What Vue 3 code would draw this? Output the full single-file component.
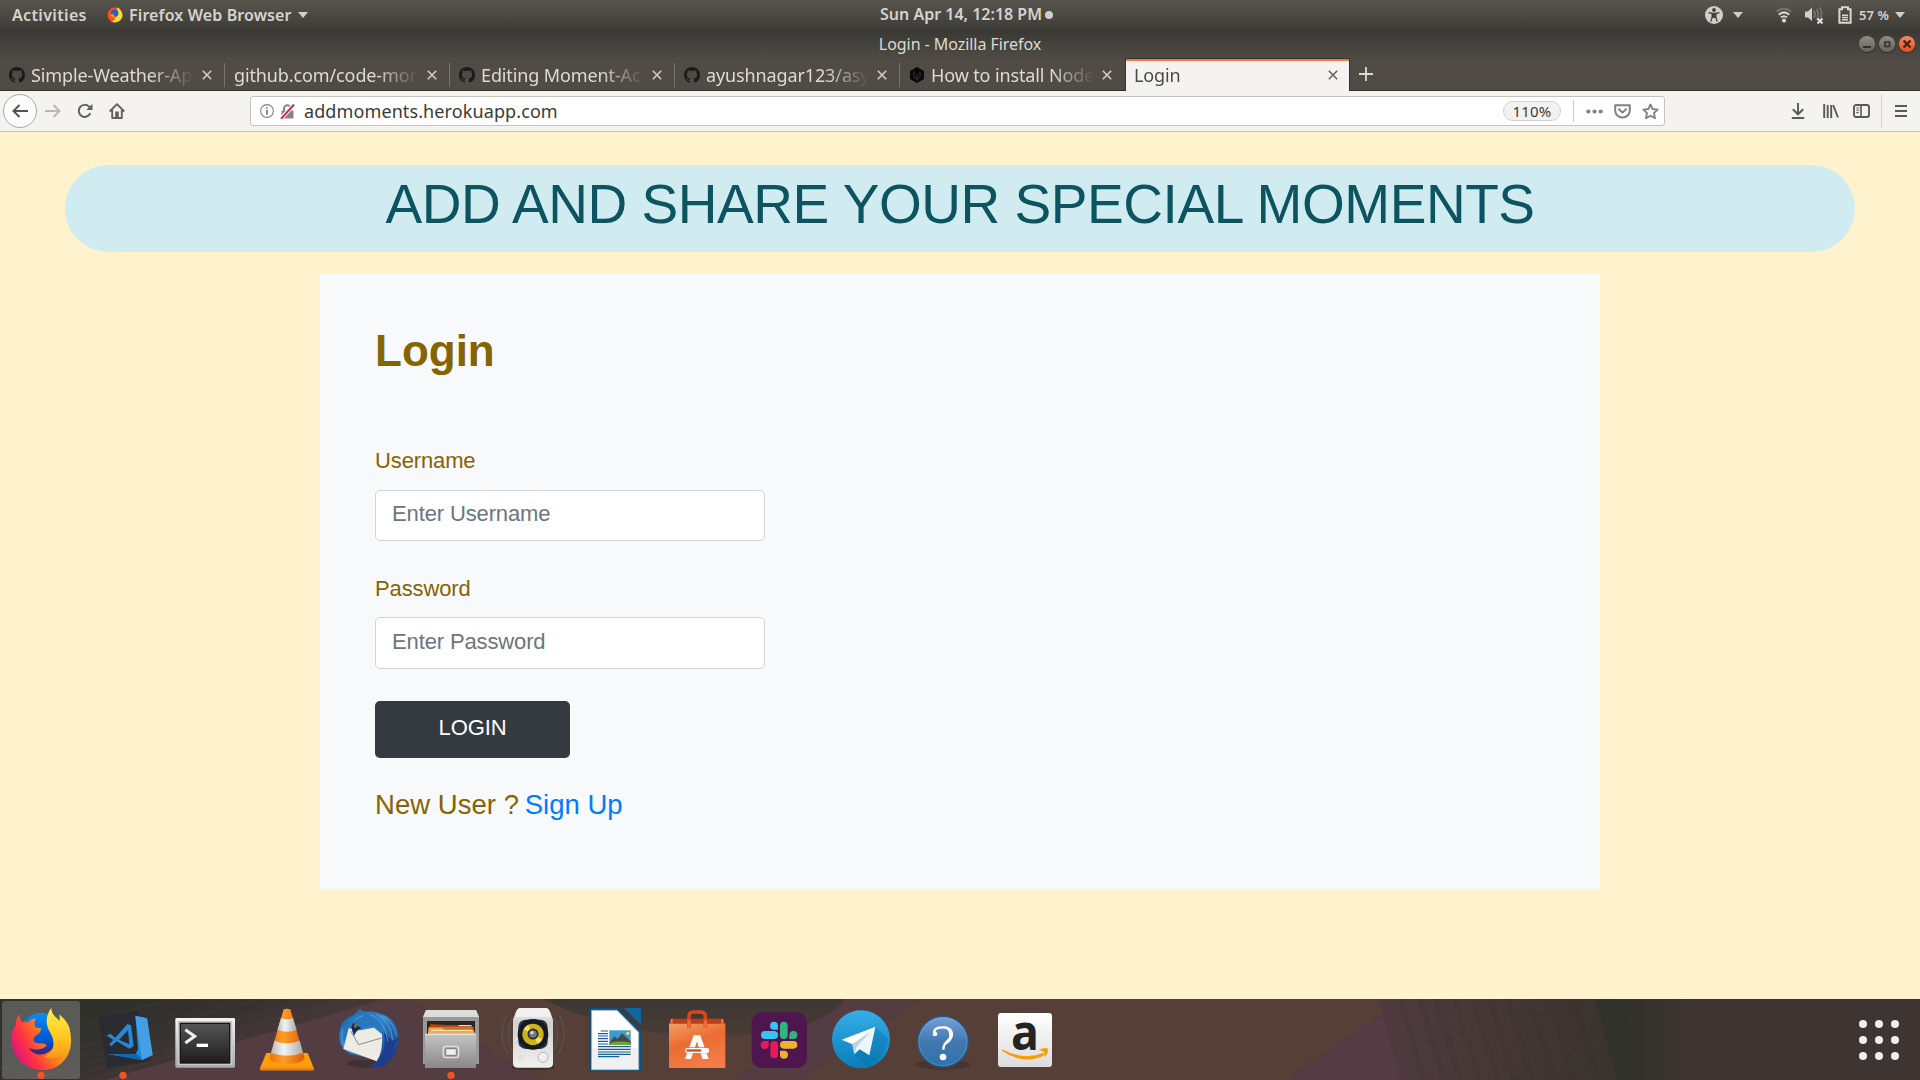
<script setup>
const tabs = [
  { title: 'Simple-Weather-Ap', icon: 'github' },
  { title: 'github.com/code-mor', icon: '' },
  { title: 'Editing Moment-Ac', icon: 'github' },
  { title: 'ayushnagar123/asy', icon: 'github' },
  { title: 'How to install Node', icon: 'hex' },
]
const rays = [1400, 1420, 1436, 1455, 1474, 1490, 1508, 1530, 1550, 1574]
</script>

<template>
  <div class="desktop">
    <header class="panel">
      <span class="activities">Activities</span>
      <svg class="ff-mini" viewBox="30 38 188 190">
        <circle cx="124" cy="132" r="88" fill="#ff4b1f" />
        <path d="M156 40C205 70 225 130 205 170C180 220 120 235 80 210C150 190 125 100 156 40Z" fill="#ffdb2e" />
        <circle cx="120" cy="112" r="44" fill="#1f5fd0" />
        <path d="M60 125L100 118L128 150L90 172Z" fill="#ff851b" />
      </svg>
      <span class="app-name">Firefox Web Browser</span>
      <svg class="caret c1" viewBox="0 0 10 6"><path d="M0 0H10L5 6Z" /></svg>
      <span class="clock">Sun Apr 14, 12:18 PM</span>
      <i class="clock-dot"></i>
      <div class="status">
        <svg width="18" height="18" viewBox="0 0 18 18">
          <circle cx="9" cy="9" r="9" fill="#d0cfcb" />
          <circle cx="9" cy="4" r="1.9" fill="#42413c" />
          <path d="M3.6 6.6L7.2 7.5H10.8L14.4 6.6M7.2 7.5V11L5.8 15.6M10.8 7.5V11L12.2 15.6" fill="none" stroke="#42413c" stroke-width="1.3" />
          <path d="M7 7h4v5H7z" fill="#42413c" />
        </svg>
        <svg class="caret c2" viewBox="0 0 10 6"><path d="M0 0H10L5 6Z" /></svg>
        <svg class="wifi" width="16" height="16" viewBox="0 0 16 16" fill="none" stroke-width="2">
          <path d="M.8 4.700Q8-1.800 15.200 4.700" stroke="#77756e" />
          <path d="M2.800 7.800Q8 3 13.200 7.800M5 10.600Q8 7.900 11 10.600" stroke="#d8d7d3" />
          <circle cx="8" cy="13.600" r="2.100" fill="#d8d7d3" />
        </svg>
        <svg class="volume" width="19" height="18" viewBox="0 0 19 18">
          <path d="M0 5.500H3L7 1.500V15L3 11.500H0Z" fill="#d0cfcb" />
          <path d="M9 5Q11 8.500 9 12M11.500 3Q15 8.500 11.500 14M14.500 1.500Q18 7 15.500 12" fill="none" stroke="#77756e" stroke-width="1.700" />
          <path d="M12.500 12.500L17.500 17.500M17.500 12.500L12.500 17.500" stroke="#e2e1dd" stroke-width="2" />
        </svg>
        <svg class="battery" width="14" height="18" viewBox="0 0 14 18">
          <path d="M4 1.200H10V3.200H12.600V16.800H1.400V3.200H4Z" fill="none" stroke="#d8d7d3" stroke-width="2" />
          <path d="M4 9.300H10M4 11.500H10M4 13.700H10" stroke="#d8d7d3" stroke-width="1.500" />
        </svg>
        <span class="percent">57 %</span>
        <svg class="caret c3" viewBox="0 0 10 6"><path d="M0 0H10L5 6Z" /></svg>
      </div>
    </header>

    <div class="titlebar">
      <span class="title">Login - Mozilla Firefox</span>
      <div class="controls">
        <i><svg viewBox="0 0 16 16"><path d="M4 11H12" stroke="#33322e" stroke-width="2" /></svg></i>
        <i><svg viewBox="0 0 16 16"><path d="M6 6H10.500V10.500H6Z" fill="none" stroke="#33322e" stroke-width="1.700" /></svg></i>
        <i class="close"><svg viewBox="0 0 16 16"><path d="M4.500 4.500L11.500 11.500M11.500 4.500L4.500 11.500" stroke="#47250f" stroke-width="2.400" /></svg></i>
      </div>
    </div>

    <nav class="tabs">
      <div v-for="t in tabs" :key="t.title" class="tab">
        <svg v-if="t.icon === 'github'" class="fav" viewBox="0 0 16 16">
          <path fill="#1b1b1b" d="M8 0C3.58 0 0 3.58 0 8c0 3.54 2.29 6.53 5.47 7.59.4.07.55-.17.55-.38 0-.19-.01-.82-.01-1.49-2.01.37-2.53-.49-2.69-.94-.09-.23-.48-.94-.82-1.13-.28-.15-.68-.52-.01-.53.63-.01 1.08.58 1.23.82.72 1.21 1.87.87 2.33.66.07-.52.28-.87.51-1.07-1.78-.2-3.64-.89-3.64-3.95 0-.87.31-1.59.82-2.15-.08-.2-.36-1.02.08-2.12 0 0 .67-.21 2.2.82.64-.18 1.32-.27 2-.27s1.36.09 2 .27c1.53-1.04 2.2-.82 2.2-.82.44 1.1.16 1.92.08 2.12.51.56.82 1.27.82 2.15 0 3.07-1.87 3.75-3.65 3.95.29.25.54.73.54 1.48 0 1.07-.01 1.93-.01 2.2 0 .21.15.46.55.38A8.01 8.01 0 0016 8c0-4.42-3.58-8-8-8z" />
        </svg>
        <svg v-else-if="t.icon === 'hex'" class="fav" viewBox="0 0 16 16">
          <path d="M8 0L15 4V12L8 16L1 12V4Z" fill="#080808" />
          <path d="M5 4.500V10L8 12.500L11 10V4.500M8 7V14" fill="none" stroke="#3c3a36" stroke-width=".9" />
        </svg>
        <span class="label">{{ t.title }}</span>
        <svg class="x" viewBox="0 0 10 10"><path d="M.8 .8L9.200 9.200M9.200 .8L.8 9.200" /></svg>
      </div>
      <div class="tab active">
        <span class="label">Login</span>
        <svg class="x" viewBox="0 0 10 10"><path d="M.8 .8L9.200 9.200M9.200 .8L.8 9.200" /></svg>
      </div>
      <svg class="plus" viewBox="0 0 14 14"><path d="M7 0V14M0 7H14" stroke="#dcdad5" stroke-width="1.800" /></svg>
    </nav>

    <div class="toolbar">
      <span class="back">
        <svg width="16" height="14" viewBox="0 0 16 14"><path d="M16 7H1.500M7.500 1L1.500 7L7.500 13" fill="none" stroke="#55544f" stroke-width="2" /></svg>
      </span>
      <svg class="fwd" width="16" height="14" viewBox="0 0 16 14"><path d="M0 7H14.500M8.500 1L14.500 7L8.500 13" fill="none" stroke="#b9b8b5" stroke-width="2" /></svg>
      <svg class="reload" width="16" height="16" viewBox="0 0 16 16">
        <path d="M13.300 10.200A6 6 0 1 1 12 3.600L13.500 5" fill="none" stroke="#62615d" stroke-width="2" />
        <path d="M15.500 .8V7H9.300Z" fill="#62615d" />
      </svg>
      <svg class="home" width="16" height="16" viewBox="0 0 16 16">
        <path d="M.7 8.500L8 1.200L15.300 8.500M3.200 7V15H12.800V7" fill="none" stroke="#62615d" stroke-width="1.900" stroke-linejoin="round" />
        <path d="M6.200 15V8.500H9.800V15Z" fill="#62615d" />
      </svg>
      <div class="urlbar">
        <svg class="info" width="14" height="14" viewBox="0 0 14 14">
          <circle cx="7" cy="7" r="6.400" fill="none" stroke="#808080" stroke-width="1.100" />
          <path d="M7 6V10.700M7 3.200V4.800" stroke="#777" stroke-width="1.700" />
        </svg>
        <svg class="lock" width="15" height="15" viewBox="0 0 15 15">
          <path d="M4 7V4.500A3.300 3.300 0 0 1 10.600 4.500V7" fill="none" stroke="#858585" stroke-width="2" />
          <rect x="1.500" y="6.500" width="12" height="8" rx="1" fill="#858585" />
          <path d="M1.200 14.500L13.800 .8" stroke="#fff" stroke-width="4" />
          <path d="M1 14.800L14 .5" stroke="#ff1040" stroke-width="2" />
        </svg>
        <span class="url">addmoments.herokuapp.com</span>
        <span class="zoom">110%</span>
        <i class="sep"></i>
        <svg class="dots" width="17" height="5" viewBox="0 0 17 5" fill="#828282"><circle cx="2.300" cy="2.500" r="2.100" /><circle cx="8.500" cy="2.500" r="2.100" /><circle cx="14.700" cy="2.500" r="2.100" /></svg>
        <svg class="pocket" width="17" height="15" viewBox="0 0 17 15" fill="none" stroke="#808080" stroke-width="2" stroke-linejoin="round">
          <path d="M1.200 1.200H15.800V6.500A7.300 7 0 0 1 1.200 6.500Z" /><path d="M5 5.200L8.500 8.600L12 5.200" stroke-linecap="round" />
        </svg>
        <svg class="star" width="17" height="17" viewBox="0 0 17 17"><path d="M8.500 1.500L10.600 6L15.700 6.600L12 10L13 15.300L8.500 12.700L4 15.300L5 10L1.300 6.600L6.400 6Z" fill="none" stroke="#808080" stroke-width="1.800" stroke-linejoin="round" /></svg>
      </div>
      <div class="tools">
        <svg width="14" height="16" viewBox="0 0 14 16"><path d="M7 0V11M1.800 6.200L7 11.300L12.200 6.200M.8 15H13.200" fill="none" stroke="#5a5955" stroke-width="1.900" /></svg>
        <svg class="lib" width="16" height="14" viewBox="0 0 16 14"><path d="M1.200 0V14M4.700 1V14M8.200 1V14M10.200 1.200L15 13.500" fill="none" stroke="#5a5955" stroke-width="1.900" /></svg>
        <svg class="side" width="17" height="14" viewBox="0 0 17 14">
          <rect x="1" y="1" width="15" height="12" rx="2" fill="none" stroke="#5a5955" stroke-width="1.900" />
          <path d="M8 1V13" stroke="#5a5955" stroke-width="1.600" /><path d="M3.300 4H6.300M3.300 6.300H6.300M3.300 8.600H5.600" stroke="#5a5955" stroke-width="1.100" />
        </svg>
        <i class="tsep"></i>
        <svg width="12" height="12" viewBox="0 0 12 12"><path d="M0 1H12M0 6H12M0 11H12" stroke="#5a5955" stroke-width="2" /></svg>
      </div>
    </div>

    <main class="page">
      <h1 class="banner">ADD AND SHARE YOUR SPECIAL MOMENTS</h1>
      <section class="card">
        <h2>Login</h2>
        <label for="user">Username</label>
        <input id="user" type="text" placeholder="Enter Username" />
        <label for="pass" class="second">Password</label>
        <input id="pass" class="pass" type="password" placeholder="Enter Password" />
        <button type="button">LOGIN</button>
        <p>New User ? <a>Sign Up</a></p>
      </section>
    </main>

    <footer class="dock">
      <svg class="wall" viewBox="0 0 1920 81" preserveAspectRatio="none">
        <defs>
          <linearGradient id="wl" gradientUnits="userSpaceOnUse" x1="150" y1="0" x2="180" y2="81">
            <stop offset="0" stop-color="#31312c" /><stop offset=".5" stop-color="#373230" /><stop offset="1" stop-color="#49383a" />
          </linearGradient>
          <linearGradient id="wr" gradientUnits="userSpaceOnUse" x1="1385" y1="0" x2="1600" y2="-20">
            <stop offset="0" stop-color="#4f3b3f" /><stop offset=".5" stop-color="#453735" /><stop offset="1" stop-color="#3a332f" />
          </linearGradient>
          <linearGradient id="we" gradientUnits="userSpaceOnUse" x1="1600" y1="0" x2="1920" y2="0">
            <stop offset="0" stop-color="#32322c" /><stop offset=".1" stop-color="#33322c" /><stop offset=".28" stop-color="#3d3431" /><stop offset="1" stop-color="#3e3432" />
          </linearGradient>
          <linearGradient id="wa" x1="0" y1="0" x2="0" y2="1"><stop offset="0" stop-color="#3d3733" /><stop offset="1" stop-color="#493b35" /></linearGradient>
        </defs>
        <rect width="1920" height="81" fill="#563f37" />
        <path d="M0 0H410L540 81H0Z" fill="#543c43" />
        <path d="M0 0H385L105 81H0Z" fill="url(#wl)" />
        <path d="M0 70L260 0M30 81L310 0M60 81L345 0M90 81L360 0M0 50L170 0" stroke="#4a4540" stroke-opacity=".45" fill="none" />
        <path d="M733 81L845 0H923L800 81Z" fill="#543c43" />
        <path d="M543 0Q620 38 720 37T845 0Z" fill="url(#wa)" />
        <path d="M1285 81L1403 0H1600V81Z" fill="#543b44" />
        <path d="M1378 0H1600L1616 81H1401Z" fill="url(#wr)" />
        <path v-for="r in rays" :key="r" :d="`M${r} 0L${r + 24} 81`" stroke="#37322e" stroke-opacity=".16" stroke-width="6" />
        <path d="M1595 0H1920V81H1616Z" fill="url(#we)" />
      </svg>

      <!-- Firefox -->
      <svg class="app" viewBox="0 12 246 243">
        <defs>
          <linearGradient id="fx" x1="0" y1=".7" x2="1" y2=".2"><stop offset="0" stop-color="#d8108a" /><stop offset=".25" stop-color="#ff3045" /><stop offset=".6" stop-color="#ff8a16" /><stop offset="1" stop-color="#ffd22e" /></linearGradient>
          <linearGradient id="fy" x1="0" y1="0" x2="0" y2="1"><stop offset="0" stop-color="#fff34a" /><stop offset=".6" stop-color="#ffc51f" /><stop offset="1" stop-color="#ff9417" /></linearGradient>
          <linearGradient id="fb" x1="0" y1="0" x2="0" y2="1"><stop offset="0" stop-color="#0a8ef5" /><stop offset=".6" stop-color="#0059d6" /><stop offset="1" stop-color="#3a1f78" /></linearGradient>
        </defs>
        <rect x="6" y="18" width="234" height="234" rx="9" fill="#fff" fill-opacity=".2" />
        <circle cx="124" cy="118" r="65" fill="url(#fb)" />
        <path d="M58 58Q46 72 48 90C28 112 30 158 52 187C82 230 150 238 186 203C212 180 218 142 210 108C205 90 198 72 178 60C184 92 184 120 168 148C150 182 104 190 86 158C104 166 124 166 140 152C134 142 118 148 104 142Q96 134 106 122Q122 116 124 100Q108 98 106 96Q100 82 108 70Q92 72 84 82Q72 78 66 82Q58 72 58 58Z" fill="url(#fx)" />
        <path d="M154 38C136 64 136 88 150 112C170 146 160 172 132 186C152 196 178 188 192 170C212 142 214 110 206 92C198 76 186 70 178 58C180 66 180 72 178 78C170 66 154 60 154 38Z" fill="url(#fy)" />
        <circle cx="123" cy="241" r="11" fill="#f05423" />
      </svg>
      <!-- VS Code -->
      <svg class="app" viewBox="246 12 246 243">
        <path d="M296 66L418 46L450 198L320 219Z" fill="#2a2b31" /><path d="M420 46L446 198" stroke="#3a3a3f" stroke-width="3" />
        <path d="M406 62L441 70L458 180L426 195L322 177L407 178L414 163Z" fill="#2489d8" />
        <path d="M406 62L441 70L450 130L458 180L426 195Z" fill="#43a0e6" /><path d="M322 177L426 195L414 178Z" fill="#0d69b5" />
        <path d="M320 122L331 116L346 128L382 87L393 91L401 153L388 161L350 139L335 152L327 150L340 134ZM384 106L357 134L388 148Z" fill="#2789d5" fill-rule="evenodd" />
        <circle cx="369" cy="241" r="11" fill="#f05423" />
      </svg>
      <!-- Terminal -->
      <svg class="app" viewBox="492 12 246 243">
        <defs><linearGradient id="te" x1="0" y1="0" x2="0" y2="1"><stop offset="0" stop-color="#555" /><stop offset="1" stop-color="#1d1d1d" /></linearGradient><linearGradient id="tf" x1="0" y1="0" x2="0" y2="1"><stop offset="0" stop-color="#f4f4f4" /><stop offset="1" stop-color="#a9a9a9" /></linearGradient></defs>
        <rect x="526" y="69" width="179" height="149" rx="4" fill="url(#tf)" /><rect x="534" y="78" width="163" height="132" fill="#c9c9c9" /><rect x="541" y="85" width="148" height="119" fill="url(#te)" stroke="#171717" stroke-width="4" />
        <path d="M556 104L584 124L556 144" fill="none" stroke="#f1f1f1" stroke-width="9" /><path d="M590 151H624" stroke="#fff" stroke-width="10" />
      </svg>
      <!-- VLC -->
      <svg class="app" viewBox="738 12 246 243">
        <defs><linearGradient id="vo" x1="0" y1="0" x2="1" y2="0"><stop offset="0" stop-color="#e87400" /><stop offset=".4" stop-color="#ff9a2b" /><stop offset="1" stop-color="#db5e00" /></linearGradient><linearGradient id="vw" x1="0" y1="0" x2="1" y2="0"><stop offset="0" stop-color="#b9b9b9" /><stop offset=".4" stop-color="#f3f3f3" /><stop offset="1" stop-color="#aaa" /></linearGradient></defs>
        <path d="M799 174H923L942 221Q942 226 936 226H784Q779 226 780 220Z" fill="#ff9e0c" /><path d="M780 218H942V226H780Z" fill="#f47f00" />
        <path d="M851 43Q861 39 871 43L914 190Q905 207 861 207T808 190Z" fill="url(#vo)" />
        <path d="M843 69Q861 77 879 69L890 105Q861 116 832 105Z" fill="url(#vw)" /><path d="M824 137Q861 152 899 137L909 174Q861 190 813 174Z" fill="url(#vw)" />
      </svg>
      <!-- Thunderbird -->
      <svg class="app" viewBox="984 12 246 243">
        <defs><linearGradient id="tb" x1="0" y1="0" x2="1" y2="1"><stop offset="0" stop-color="#1b62ab" /><stop offset=".45" stop-color="#2f86cc" /><stop offset="1" stop-color="#152866" /></linearGradient></defs>
        <ellipse cx="1100" cy="206" rx="60" ry="12" fill="#000" fill-opacity=".2" />
        <path d="M1018 135C1014 96 1030 70 1058 62L1080 42L1092 50C1140 44 1190 70 1195 115C1200 163 1178 216 1108 218L1134 196L1050 176Q1022 160 1018 135Z" fill="url(#tb)" />
        <path d="M1046 100L1030 162L1130 199Q1150 170 1146 118L1122 98L1080 106Z" fill="#eeebe4" />
        <path d="M1052 108L1076 149L1144 129" fill="none" stroke="#8f8b84" stroke-width="3" />
        <path d="M1048 90Q1050 56 1092 50Q1150 56 1156 120Q1140 92 1106 94Q1070 98 1062 124Q1056 110 1054 96Z" fill="#2878bd" />
        <path d="M1054 96L1062 120Q1068 104 1084 100L1060 84Z" fill="#12294f" /><circle cx="1067" cy="93" r="5" fill="#e68422" /><circle cx="1068" cy="93" r="2.500" fill="#111" />
        <path d="M1152 112C1160 164 1146 196 1108 218Q1160 220 1182 180L1166 188L1190 160L1174 164L1196 130L1176 138Z" fill="#1c3c91" />
        <path d="M1110 58Q1154 74 1164 140M1130 58Q1172 78 1178 134M1146 62Q1184 84 1190 124M1090 62Q1070 66 1062 78M1028 104Q1022 136 1032 156" fill="none" stroke="#70bdf0" stroke-width="3" stroke-opacity=".6" />
      </svg>
      <!-- Files -->
      <svg class="app" viewBox="30 12 246 243">
        <defs><linearGradient id="fi" x1="0" y1="0" x2="0" y2="1"><stop offset="0" stop-color="#c4c4c4" /><stop offset="1" stop-color="#888" /></linearGradient></defs>
        <path d="M78 45H228L237 66V207H69V66Z" fill="#999" /><path d="M78 45H228L237 66H69Z" fill="#dcdcdc" /><path d="M81 78H225V122H81Z" fill="#292522" />
        <path d="M91 87L140 90H216V120H87Z" fill="#a8440e" /><path d="M86 95H220V120H84Z" fill="#d66e1b" /><path d="M86 98H128L132 105H222V120H84Z" fill="#eda653" /><path d="M94 106H216M176 92H214" stroke="#fff0cf" stroke-width="3" /><path d="M84 112H224V120H84Z" fill="#e1b06b" />
        <path d="M75 120Q75 117 79 117H225Q229 117 229 120L228 219H75Z" fill="url(#fi)" /><path d="M76 118H228" stroke="#eee" stroke-width="3" />
        <rect x="130" y="154" width="46" height="34" rx="7" fill="#a8a8a8" stroke="#e2e2e2" stroke-width="4" /><rect x="137" y="161" width="32" height="20" rx="2" fill="#eee" stroke="#777" stroke-width="3" />
        <circle cx="153" cy="241" r="11" fill="#f05423" />
      </svg>
      <!-- Rhythmbox -->
      <svg class="app" viewBox="276 12 246 243">
        <defs><linearGradient id="rh" x1="0" y1="0" x2="0" y2="1"><stop offset="0" stop-color="#fafafa" /><stop offset=".25" stop-color="#cfcfcf" /><stop offset="1" stop-color="#f0f0ee" /></linearGradient></defs>
        <g fill="none" stroke="#66708d" stroke-opacity=".3" stroke-width="4"><path d="M336 68Q314 115 336 168M322 58Q290 115 322 175M462 68Q484 115 462 168M476 58Q508 115 476 175" /></g>
        <ellipse cx="399" cy="216" rx="66" ry="10" fill="#000" fill-opacity=".25" />
        <path d="M360 39H438Q446 39 451 52L459 74V205Q459 218 446 218H352Q339 218 339 205V74L348 50Q353 39 360 39Z" fill="url(#rh)" /><path d="M360 40H438Q448 44 452 65H346Q350 44 360 40Z" fill="#f1f1f1" />
        <rect x="355" y="74" width="88" height="88" rx="22" fill="#2a3346" /><circle cx="399" cy="118" r="46" fill="#151a24" /><circle cx="399" cy="118" r="32" fill="#cdb41b" /><path d="M399 118L371 103A32 32 0 0 1 385 89ZM399 118L427 133A32 32 0 0 1 413 147Z" fill="#f0e05c" /><circle cx="399" cy="117" r="14" fill="#777c82" stroke="#292d33" stroke-width="5" /><circle cx="396" cy="113" r="5" fill="#d8dce0" />
        <circle cx="429" cy="187" r="15" fill="#efefef" stroke="#b7b7b7" stroke-width="3" /><circle cx="362" cy="189" r="6" fill="none" stroke="#ccc" stroke-width="2" />
      </svg>
      <!-- Writer -->
      <svg class="app" viewBox="522 12 246 243">
        <path d="M567 39H655L723 108V231H567Z" fill="#0a4f7d" /><path d="M672 39H719Q723 39 723 44V90Z" fill="#0d67a2" /><path d="M575 46H651L716 112V224H575Z" fill="#fff" stroke="#a6b6c0" stroke-width="3" /><path d="M577 160H714V221H577Z" fill="#f0f0f0" />
        <path d="M602 108H624M594 116H624M594 123H624M594 131H624M594 139H624M594 147H624M594 155H692M594 163H692M594 171H692M594 178H692M594 185H658" stroke="#176195" stroke-width="3.500" />
        <rect x="628" y="106" width="64" height="44" fill="#3b9bd7" /><path d="M628 143L643 124L652 132L666 115L692 139V150H628Z" fill="#454c4c" /><path d="M628 144Q660 136 692 143V150H628Z" fill="#6da82e" /><circle cx="683" cy="115" r="5" fill="#ffe53b" />
      </svg>
      <!-- Software -->
      <svg class="app" viewBox="768 12 246 243">
        <defs><linearGradient id="so" x1="0" y1="0" x2=".4" y2="1"><stop offset="0" stop-color="#f0a064" /><stop offset=".5" stop-color="#ec6b33" /><stop offset="1" stop-color="#f27b46" /></linearGradient></defs>
        <path d="M814 71H968L975 86H807Z" fill="#b8401a" /><rect x="807" y="86" width="169" height="133" fill="url(#so)" />
        <path d="M867 98V65Q867 51 879 51H904Q916 51 916 65V98" fill="none" stroke="#d9471c" stroke-width="11" /><path d="M867 98V76M916 98V76" stroke="#f26a38" stroke-width="9" /><path d="M815 72V86M967 72V86" stroke="#ef784a" stroke-width="6" />
        <path d="M881 121H901L926 192H907L891 139L873 192H855Z" fill="#fff" /><rect x="855" y="157" width="73" height="18" rx="6" fill="#ee7038" /><rect x="856" y="159" width="71" height="15" rx="5" fill="#fff" /><rect x="859" y="163" width="45" height="7" rx="3" fill="#e54f1e" />
      </svg>
      <!-- Slack -->
      <svg class="app" viewBox="1014 12 246 243">
        <rect x="1055" y="52" width="166" height="167" rx="32" fill="#4f154e" />
        <g fill="#35c5f0"><rect x="1083" y="108" width="51" height="24" rx="12" /><path d="M1134 104H1122A12 12 0 1 1 1134 92Z" /></g>
        <g fill="#2eb67d"><rect x="1140" y="80" width="23" height="52" rx="11.500" /><path d="M1168 132V120A12 12 0 1 1 1180 132Z" /></g>
        <g fill="#ecb22e"><rect x="1140" y="138" width="52" height="23" rx="11.500" /><path d="M1140 167H1152A12 12 0 1 1 1140 179Z" /></g>
        <g fill="#e01e5a"><rect x="1111" y="138" width="23" height="52" rx="11.500" /><path d="M1106 138V150A12 12 0 1 1 1094 138Z" /></g>
      </svg>
      <!-- Telegram -->
      <svg class="app" viewBox="60 12 246 243">
        <defs><linearGradient id="tg" x1="0" y1="0" x2="0" y2="1"><stop offset="0" stop-color="#36aee9" /><stop offset="1" stop-color="#087db9" /></linearGradient></defs>
        <circle cx="183" cy="133" r="87" fill="url(#tg)" /><path d="M226 96L264 130Q258 180 205 217L160 178Z" fill="#08669e" fill-opacity=".3" />
        <path d="M126 134L226 96L208 181L179 163L163 178L157 147Z" fill="#edf5fa" /><path d="M126 134L226 96L157 147Z" fill="#fff" /><path d="M157 147L210 112L170 155L163 178Z" fill="#bdd2df" />
      </svg>
      <!-- Help -->
      <svg class="app" viewBox="306 12 246 243">
        <defs><linearGradient id="he" x1="0" y1="0" x2="0" y2="1"><stop offset="0" stop-color="#77a0d8" /><stop offset=".5" stop-color="#4278b0" /><stop offset="1" stop-color="#2d73aa" /></linearGradient></defs>
        <ellipse cx="429" cy="209" rx="82" ry="15" fill="#1b1717" fill-opacity=".25" /><circle cx="429" cy="140" r="76" fill="url(#he)" stroke="#235984" stroke-width="4" /><circle cx="429" cy="140" r="72" fill="none" stroke="#8fb8de" stroke-opacity=".5" stroke-width="2" />
        <path d="M404 121Q396 96 430 97Q454 98 454 119C454 139 430 136 430 164" fill="none" stroke="#fff" stroke-width="7" /><path d="M436 94Q462 99 459 122Q455 139 436 150Q450 133 447 115Q446 102 428 97Z" fill="#fff" /><circle cx="405" cy="117" r="7" fill="#fff" /><circle cx="429" cy="186" r="10" fill="#fff" />
      </svg>
      <!-- Amazon -->
      <svg class="app" viewBox="552 12 246 243">
        <defs><linearGradient id="am" x1="0" y1="0" x2="0" y2="1"><stop offset="0" stop-color="#fff" /><stop offset="1" stop-color="#dcdcdc" /></linearGradient></defs>
        <rect x="594" y="54" width="162" height="162" rx="9" fill="url(#am)" />
        <text x="633" y="166" class="amazon-a" textLength="84" lengthAdjust="spacingAndGlyphs">a</text>
        <path d="M606 163Q672 198 730 173L735 180Q672 212 606 167Z" fill="#ff9900" /><path d="M716 165Q735 156 744 161Q745 174 734 187Q740 168 716 165Z" fill="#ff9900" />
      </svg>
      <svg class="grid" viewBox="0 0 40 40" fill="#efeeed">
        <template v-for="r in 3" :key="r"><circle v-for="c in 3" :key="c" :cx="c * 16 - 12" :cy="r * 16 - 12" r="4" /></template>
      </svg>
    </footer>
  </div>
</template>

<style>
body { margin: 0; overflow: hidden; }
</style>

<style scoped>
* { box-sizing: border-box; }
.desktop { width: 1920px; height: 1080px; display: flex; flex-direction: column; font-family: "Noto Sans", sans-serif; background: #fff3cd; overflow: hidden; }
svg { display: block; flex: none; }
.panel { position: relative; height: 30px; flex: none; display: flex; align-items: center; background: linear-gradient(#58554d, #3d3c37); color: #d4d3cf; font-size: 16px; font-weight: 600; line-height: 28px; white-space: nowrap; }
.activities { width: 96px; padding-left: 12px; letter-spacing: .35px; margin-top: -1px; }
.app-name { letter-spacing: .12px; margin-top: -1px; }
.ff-mini { width: 16px; height: 16px; margin-right: 6px; margin-left: 11px; }
.caret { width: 10px; height: 6px; fill: #d0cfcb; }
.c1 { margin-left: 6px; }
.clock { position: absolute; left: 880px; top: 0; }
.clock-dot { position: absolute; left: 1045px; top: 11px; width: 8px; height: 8px; border-radius: 50%; background: #d0cfcb; }
.status { margin-left: auto; display: flex; align-items: center; padding-right: 15px; }
.c2 { margin-left: 10px; }
.wifi { margin-left: 33px; }
.volume { margin-left: 13px; }
.battery { margin-left: 14px; }
.percent { font-size: 13px; margin-left: 7px; width: 32px; font-weight: 600; letter-spacing: .1px; }
.c3 { margin-left: 4px; }
.titlebar { height: 28px; flex: none; position: relative; background: linear-gradient(#393834, #4e4b44); color: #dcdad4; font-size: 16px; line-height: 28px; text-align: center; }
.title { display: inline-block; letter-spacing: -.05px; }
.controls { position: absolute; right: 5px; top: 6px; display: flex; gap: 4px; }
.controls i { width: 16px; height: 16px; border-radius: 50%; background: linear-gradient(#8e8c84, #65635c); box-shadow: 0 1px 1px #2d2c28; }
.controls .close { background: linear-gradient(#f58a68, #e74e1d); }
.tabs { height: 33px; flex: none; display: flex; background: #504c45; border-bottom: 1px solid #33302b; }
.tab { width: 225px; height: 32px; display: flex; align-items: center; padding: 2px 13px 0 9px; position: relative; color: #dedbd5; font-size: 18px; }
.tab:not(.active):not(:nth-child(5))::after { content: ""; position: absolute; right: 0; top: 5px; height: 24px; width: 1px; background: #78746c; }
.fav { width: 16px; height: 16px; margin-right: 6px; }
.label { flex: 1; min-width: 0; white-space: nowrap; overflow: hidden; margin-right: 5px; line-height: 28px; letter-spacing: -.12px; -webkit-mask-image: linear-gradient(to left, transparent 3px, #000 46px); mask-image: linear-gradient(to left, transparent 3px, #000 46px); }
.x { width: 10px; height: 10px; fill: none; stroke: #d0cdc7; stroke-width: 1.600; }
.active { height: 33px; background: #f4f3f2; border: 1px solid #35322d; border-bottom: 0; color: #4a4945; padding: 0 11px 0 8px; box-shadow: inset 0 2px #ee7a4c; }
.active .x { stroke: #666; }
.plus { width: 14px; height: 14px; margin: 9px 0 0 9px; }
.toolbar { height: 41px; flex: none; background: #f4f3f2; border-bottom: 1px solid #c6c3bf; display: flex; align-items: center; padding-left: 3px; }
.back { width: 34px; height: 34px; border: 1px solid #aaa9a6; border-radius: 50%; background: #fcfcfc; display: flex; align-items: center; justify-content: center; }
.fwd { margin-left: 8px; }
.reload { margin-left: 16px; }
.home { margin-left: 16px; }
.urlbar { margin-left: 125px; width: 1415px; height: 30px; border: 1px solid #c6c2be; border-radius: 3px; background: #fff; display: flex; align-items: center; padding-left: 9px; color: #3b3a37; font-size: 18px; }
.lock { margin-left: 6px; }
.url { margin-left: 9px; flex: 1; line-height: 28px; letter-spacing: .1px; }
.zoom { width: 58px; height: 20px; border: 1px solid #d2d0d0; border-radius: 10px; background: #f2f2f3; font-size: 15px; line-height: 19px; letter-spacing: .2px; text-align: center; }
.sep { width: 1px; height: 22px; background: #ccc; margin-left: 12px; }
.dots { margin-left: 12px; }
.pocket { margin-left: 11px; }
.star { margin: 0 5px 0 11px; }
.tools { display: flex; align-items: center; margin-left: 126px; }
.lib { margin-left: 18px; }
.side { margin-left: 14px; }
.tsep { width: 1px; height: 34px; background: #d7d5d2; margin: 0 13px 0 11px; }
.page { height: 867px; flex: none; background: #fff3cd; padding-top: 33px; font-family: "Liberation Sans", Arial, sans-serif; }
.banner { width: 1790px; height: 87px; margin: 0 auto; padding-top: 6px; border-radius: 50px; background: #d1ecf1; color: #0c5460; text-align: center; font-size: 55px; line-height: 66px; font-weight: 400; letter-spacing: -.45px; }
.card { width: 1280px; height: 615px; margin: 22px auto 0; padding: 51px 55px 0; display: flex; flex-direction: column; align-items: flex-start; background: #f8f9fa; color: #856404; }
h2 { margin: 0 0 69px; font-size: 44px; line-height: 52px; }
label { font-size: 22px; line-height: 30px; margin-bottom: 14px; letter-spacing: -.13px; }
label.second { margin: 33px 0 13px; }
input { width: 390px; height: 51px; padding: 0 16px 3px; border: 1px solid #ced4da; border-radius: 5px; background: #fff; font: 22px "Liberation Sans", Arial, sans-serif; letter-spacing: -.13px; }
input.pass { height: 52px; }
input::placeholder { color: #6c757d; opacity: 1; }
button { width: 195px; height: 57px; margin-top: 32px; padding: 0 0 3px; border: 0; border-radius: 5px; background: #343a40; color: #fff; font: 22px "Liberation Sans", Arial, sans-serif; letter-spacing: -.13px; }
p { margin: 27px 0 0; font-size: 27.500px; line-height: 40px; letter-spacing: .03px; }
a { color: #007bff; margin-left: -2px; }
.dock { position: relative; height: 81px; flex: none; display: flex; }
.wall { position: absolute; inset: 0; width: 1920px; height: 81px; }
.app { position: relative; width: 82px; height: 81px; }
.amazon-a { font: 700 149px "Open Sans", sans-serif; fill: #242424; }
.grid { position: relative; width: 40px; height: 40px; margin: 21px 21px 0 auto; }
</style>
